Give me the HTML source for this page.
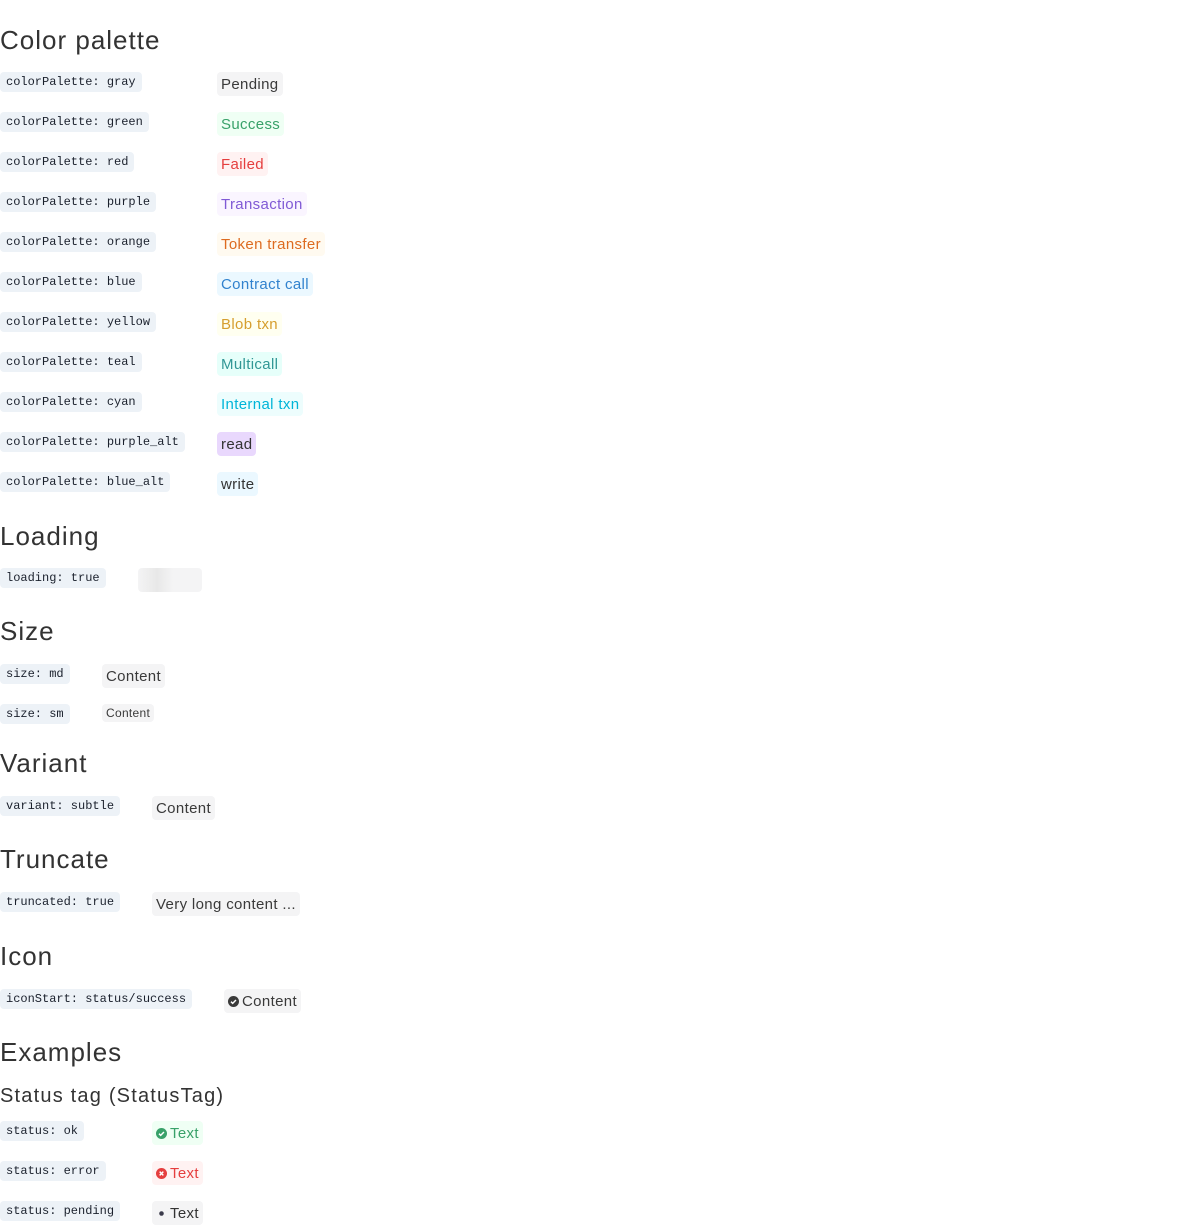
<!DOCTYPE html>
<html><head><meta charset="utf-8">
<style>
*{margin:0;padding:0;box-sizing:border-box}
body{width:1200px;height:1225px;background:#fff;position:relative;font-family:"Liberation Sans",sans-serif;color:#2d3748;overflow:hidden}
.h{position:absolute;left:0;font-size:26px;font-weight:400;color:#333;letter-spacing:1px;line-height:30px}
.h2{position:absolute;left:0;font-size:20px;color:#333;line-height:24px;letter-spacing:1.2px}
.c{position:absolute;left:0;height:20px;line-height:20px;padding:0 6px;background:#edf2f7;border-radius:4px;font-family:"Liberation Mono",monospace;font-size:12px;color:#1a202c}
.t{position:absolute;height:24px;line-height:25px;padding:0 4px;border-radius:4px;font-size:15px;letter-spacing:0.35px;background:#f4f4f5;color:#3a3a3a;white-space:nowrap}
.sm{height:18px;line-height:18px;font-size:12px;letter-spacing:0.3px}
svg{vertical-align:-1px;margin-right:3px}
</style></head><body>
<div class="h" style="top:25px">Color palette</div>
<div class="c" style="top:72px">colorPalette: gray</div><div class="t" style="top:72px;left:217px">Pending</div>
<div class="c" style="top:112px">colorPalette: green</div><div class="t" style="top:112px;left:217px;background:#effff4;color:#38a169">Success</div>
<div class="c" style="top:152px">colorPalette: red</div><div class="t" style="top:152px;left:217px;background:#fff2f2;color:#e53e3e">Failed</div>
<div class="c" style="top:192px">colorPalette: purple</div><div class="t" style="top:192px;left:217px;background:#faf5ff;color:#805ad5">Transaction</div>
<div class="c" style="top:232px">colorPalette: orange</div><div class="t" style="top:232px;left:217px;background:#fffaf0;color:#dd6b20">Token transfer</div>
<div class="c" style="top:272px">colorPalette: blue</div><div class="t" style="top:272px;left:217px;background:#ebf8ff;color:#3182ce">Contract call</div>
<div class="c" style="top:312px">colorPalette: yellow</div><div class="t" style="top:312px;left:217px;background:#fffff0;color:#d69e2e">Blob txn</div>
<div class="c" style="top:352px">colorPalette: teal</div><div class="t" style="top:352px;left:217px;background:#e6fffa;color:#319795">Multicall</div>
<div class="c" style="top:392px">colorPalette: cyan</div><div class="t" style="top:392px;left:217px;background:#edfdfd;color:#00b5d8">Internal txn</div>
<div class="c" style="top:432px">colorPalette: purple_alt</div><div class="t" style="top:432px;left:217px;background:#e9d8fd;color:#333">read</div>
<div class="c" style="top:472px">colorPalette: blue_alt</div><div class="t" style="top:472px;left:217px;background:#ebf8ff;color:#333">write</div>

<div class="h" style="top:521px">Loading</div>
<div class="c" style="top:568px">loading: true</div>
<div style="position:absolute;left:138px;top:568px;width:64px;height:24px;border-radius:4px;background:linear-gradient(90deg,#f4f4f5 0%,#e8e8e8 30%,#f4f4f5 55%,#f4f4f5 100%)"></div>

<div class="h" style="top:616px">Size</div>
<div class="c" style="top:664px">size: md</div><div class="t" style="top:664px;left:102px">Content</div>
<div class="c" style="top:704px">size: sm</div><div class="t sm" style="top:704px;left:102px">Content</div>

<div class="h" style="top:748px">Variant</div>
<div class="c" style="top:796px">variant: subtle</div><div class="t" style="top:796px;left:152px">Content</div>

<div class="h" style="top:844px">Truncate</div>
<div class="c" style="top:892px">truncated: true</div><div class="t" style="top:892px;left:152px">Very long content ...</div>

<div class="h" style="top:941px">Icon</div>
<div class="c" style="top:989px">iconStart: status/success</div><div class="t" style="top:989px;left:224px"><svg width="11" height="11" viewBox="0 0 12 12"><circle cx="6" cy="6" r="6" fill="#3a3a3a"/><path d="M3.3 6.2l1.8 1.8 3.6-3.6" stroke="#fff" stroke-width="1.6" fill="none"/></svg>Content</div>

<div class="h" style="top:1037px">Examples</div>
<div class="h2" style="top:1084px">Status tag (StatusTag)</div>
<div class="c" style="top:1121px">status: ok</div><div class="t" style="top:1121px;left:152px;background:#effff4;color:#38a169"><svg width="11" height="11" viewBox="0 0 12 12"><circle cx="6" cy="6" r="6" fill="#38a169"/><path d="M3.3 6.2l1.8 1.8 3.6-3.6" stroke="#fff" stroke-width="1.6" fill="none"/></svg>Text</div>
<div class="c" style="top:1161px">status: error</div><div class="t" style="top:1161px;left:152px;background:#fff2f2;color:#e53e3e"><svg width="11" height="11" viewBox="0 0 12 12"><circle cx="6" cy="6" r="6" fill="#e53e3e"/><path d="M4 4l4 4M8 4l-4 4" stroke="#fff" stroke-width="1.6"/></svg>Text</div>
<div class="c" style="top:1201px">status: pending</div><div class="t" style="top:1201px;left:152px;color:#333"><svg width="11" height="11" viewBox="0 0 12 12"><circle cx="6" cy="6" r="2.5" fill="#3a3a4a"/></svg>Text</div>
</body></html>
